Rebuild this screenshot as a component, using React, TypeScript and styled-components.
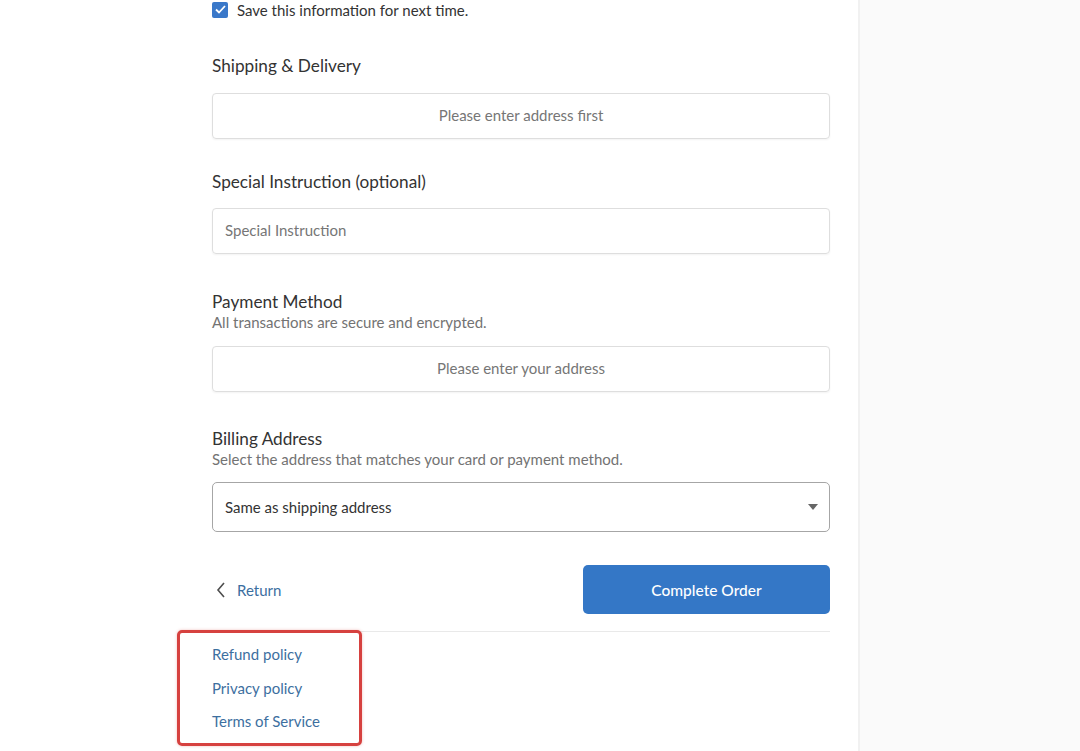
import styled, { createGlobalStyle } from 'styled-components';

const GlobalStyle = createGlobalStyle`
  html, body {
    margin: 0;
    padding: 0;
    background: #ffffff;
    font-family: Lato, "Open Sans", sans-serif;
    color: #333333;
  }
  * { box-sizing: border-box; }
`;

const Page = styled.div`
  display: flex;
  height: 751px;
  overflow: hidden;
`;

const Main = styled.div`
  width: 858px;
  flex-shrink: 0;
  padding: 0 28px 0 212px;
`;

const Aside = styled.div`
  flex: 1;
  background: #fafafa;
  border-left: 2px solid #f1f1f1;
`;

const CheckRow = styled.label`
  display: flex;
  align-items: center;
  gap: 9px;
  height: 21px;
  margin-top: -1px;
  font-size: 15px;
  color: #333;
`;

const Box = styled.span`
  width: 16px;
  height: 16px;
  border-radius: 2px;
  background: #3a78c9;
  display: flex;
  align-items: center;
  justify-content: center;
`;

const Heading = styled.h2<{ $top: number }>`
  margin: ${(p) => p.$top}px 0 0;
  font-size: 17.2px;
  font-weight: 400;
  line-height: 22px;
  color: #333;
`;

const Sub = styled.p`
  margin: 0;
  font-size: 15px;
  line-height: 18px;
  color: #737373;
`;

const Field = styled.div<{ $top: number; $center?: boolean }>`
  margin-top: ${(p) => p.$top}px;
  height: 46px;
  border: 1px solid #dedede;
  border-radius: 4px;
  box-shadow: 0 1px 2px rgba(0, 0, 0, 0.05);
  display: flex;
  align-items: center;
  justify-content: ${(p) => (p.$center ? 'center' : 'flex-start')};
  padding: 0 12px 2px;
  font-size: 15px;
  color: #767676;
`;

const Select = styled.div`
  margin-top: 14px;
  height: 50px;
  border: 1px solid #a6a6a6;
  border-radius: 5px;
  display: flex;
  align-items: center;
  justify-content: space-between;
  padding: 0 11px 0 12px;
  font-size: 15px;
  color: #333;
`;

const Caret = styled.span`
  width: 0;
  height: 0;
  border-left: 5px solid transparent;
  border-right: 5px solid transparent;
  border-top: 6px solid #666;
`;

const Actions = styled.div`
  margin-top: 33px;
  display: flex;
  align-items: center;
  justify-content: space-between;
`;

const Back = styled.a`
  display: flex;
  align-items: center;
  gap: 11px;
  padding-left: 4px;
  font-size: 15px;
  color: #3b6e9f;
  text-decoration: none;
`;

const Submit = styled.button`
  width: 247px;
  height: 49px;
  border: none;
  border-radius: 5px;
  background: #3477c6;
  color: #ffffff;
  font-family: inherit;
  font-size: 15.5px;
  font-weight: 500;
`;

const Footer = styled.div`
  margin-top: 17px;
  border-top: 1px solid #e9e9e9;
`;

const Highlight = styled.div`
  margin: -2px 0 0 -35px;
  width: 185px;
  height: 116px;
  border: 3px solid #d6413f;
  border-radius: 5px;
  box-shadow: 0 0 3px rgba(214, 65, 63, 0.35);
  padding: 12px 0 0 32px;
  display: flex;
  flex-direction: column;
  gap: 15px;
`;

const PolicyLink = styled.a`
  font-size: 15px;
  line-height: 18.5px;
  color: #3d6f9f;
  text-decoration: none;
`;

export default function App() {
  return (
    <>
      <GlobalStyle />
      <Page>
        <Main>
          <CheckRow>
            <Box>
              <svg width="11" height="9" viewBox="0 0 11 9" fill="none">
                <path d="M1 4.5L4 7.5L10 1" stroke="#fff" strokeWidth="1.8" />
              </svg>
            </Box>
            Save this information for next time.
          </CheckRow>

          <Heading $top={35}>Shipping &amp; Delivery</Heading>
          <Field $top={16} $center>Please enter address first</Field>

          <Heading $top={32}>Special Instruction (optional)</Heading>
          <Field $top={15}>Special Instruction</Field>

          <Heading $top={37}>Payment Method</Heading>
          <Sub>All transactions are secure and encrypted.</Sub>
          <Field $top={15} $center>Please enter your address</Field>

          <Heading $top={36}>Billing Address</Heading>
          <Sub>Select the address that matches your card or payment method.</Sub>
          <Select>
            Same as shipping address
            <Caret />
          </Select>

          <Actions>
            <Back href="#">
              <svg width="10" height="16" viewBox="0 0 10 16" fill="none">
                <path d="M8 1L2 8L8 15" stroke="#4d4d4d" strokeWidth="1.6" />
              </svg>
              Return
            </Back>
            <Submit>Complete Order</Submit>
          </Actions>

          <Footer>
            <Highlight>
              <PolicyLink href="#">Refund policy</PolicyLink>
              <PolicyLink href="#">Privacy policy</PolicyLink>
              <PolicyLink href="#">Terms of Service</PolicyLink>
            </Highlight>
          </Footer>
        </Main>
        <Aside />
      </Page>
    </>
  );
}
